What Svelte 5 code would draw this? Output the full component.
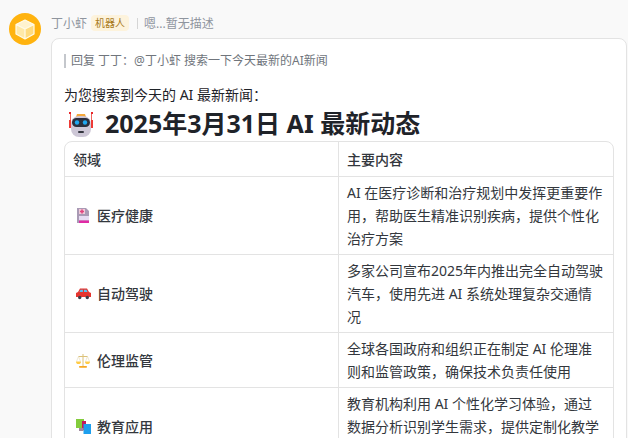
<script>
  const rows = [
    { icon: "med", name: "医疗健康", text: "AI 在医疗诊断和治疗规划中发挥更重要作用，帮助医生精准识别疾病，提供个性化治疗方案" },
    { icon: "car", name: "自动驾驶", text: "多家公司宣布2025年内推出完全自动驾驶汽车，使用先进 AI 系统处理复杂交通情况" },
    { icon: "scale", name: "伦理监管", text: "全球各国政府和组织正在制定 AI 伦理准则和监管政策，确保技术负责任使用" },
    { icon: "books", name: "教育应用", text: "教育机构利用 AI 个性化学习体验，通过数据分析识别学生需求，提供定制化教学内容" }
  ];
</script>

<div class="message">
  <div class="avatar">
    <svg viewBox="0 0 32 32" width="32" height="32">
      <circle cx="16" cy="16" r="16" fill="#ffb30f" />
      <path d="M16 7 25 11.500V21l-9 5-9-5v-9.500z" fill="#ffe9a8" />
      <path d="M16 7 25 11.500 16 16 7 11.500z" fill="#fff3cf" />
      <path d="M16 16v10l9-5v-9.500z" fill="#ffdc80" />
      <path d="M16 7 25 11.500V21l-9 5-9-5v-9.500zM7 11.500 16 16l9-4.500M16 16v10" fill="none" stroke="#fffbe9" stroke-width="1.200" stroke-linejoin="round" />
    </svg>
  </div>
  <div class="body">
    <div class="meta">
      <span class="name">丁小虾</span>
      <span class="tag">机器人</span>
      <span class="desc">嗯...暂无描述</span>
    </div>
    <div class="bubble">
      <div class="reply">回复 丁丁：@丁小虾 搜索一下今天最新的AI新闻</div>
      <p class="intro">为您搜索到今天的 AI 最新新闻：</p>
      <h1>
        <svg class="robot" viewBox="0 0 26 26" width="26" height="26">
          <path d="M9 2h8l1 3H8z" fill="#f6a93b" />
          <path d="M2.500 1v14M23.500 1v14" stroke="#f0645c" stroke-width="1" />
          <rect x="1" y="0" width="2" height="2" fill="#e8262a" />
          <rect x="23" y="0" width="2" height="2" fill="#e8262a" />
          <rect x="1" y="8" width="2" height="8" fill="#ee3b36" />
          <rect x="23" y="8" width="2" height="8" fill="#ee3b36" />
          <rect x="3" y="4" width="20" height="21" rx="8" fill="#cdc7d6" />
          <rect x="4" y="6" width="18" height="9" rx="4.500" fill="#2b2f3d" />
          <circle cx="9" cy="10.500" r="2.200" fill="#1ea7f0" />
          <circle cx="17" cy="10.500" r="2.200" fill="#1ea7f0" />
          <rect x="10" y="19" width="6" height="2" rx="1" fill="#33353f" />
        </svg>
        <span>2025年3月31日 AI 最新动态</span>
      </h1>
      <table>
        <thead>
          <tr><th>领域</th><th>主要内容</th></tr>
        </thead>
        <tbody>
          {#each rows as row}
            <tr>
              <td class="topic">
                <strong>
                  <svg class="emoji" viewBox="0 0 15 15" width="15" height="15">
                    {#if row.icon === "med"}
                      <path d="M1 0h9l3 3v12H1z" fill="#a99ab5" />
                      <rect x="3" y="1" width="6" height="5" fill="#f0c9d8" />
                      <path d="M5.200 1.500h1.600v4H5.200zM4 2.800h4v1.400H4z" fill="#e0457f" />
                      <rect x="3" y="8" width="10" height="4.500" fill="#e6dcf2" />
                      <rect x="3" y="12.500" width="10" height="2.500" fill="#e02aa5" />
                    {:else if row.icon === "car"}
                      <path d="M4 2.500h7l2 3.500 2 1v4H0V7l2-1z" fill="#e5352f" />
                      <path d="M4.600 3.700h2.300V6H3.400zM8 3.700h2.400l1.200 2.300H8z" fill="#59c1f0" />
                      <circle cx="3.700" cy="11.500" r="1.700" fill="#3a3d4a" />
                      <circle cx="11.300" cy="11.500" r="1.700" fill="#3a3d4a" />
                    {:else if row.icon === "scale"}
                      <path d="M7 1v12M2.500 3.500h9" stroke="#dcc27a" stroke-width="1" fill="none" />
                      <path d="M0 8.500h5C5 10.500 4 11 2.500 11S0 10.500 0 8.500zM9 8.500h5c0 2-1 2.500-2.500 2.500S9 10.500 9 8.500z" fill="#ffcb45" />
                      <path d="M2.500 3.500.5 8.500M2.500 3.500l2 5M11.500 3.500l-2 5M11.500 3.500l2 5" stroke="#e0d3a8" stroke-width=".5" />
                      <rect x="3" y="13" width="8" height="1.800" rx=".8" fill="#f7a823" />
                    {:else}
                      <rect x="0" y="0" width="8" height="9" fill="#83cc3c" />
                      <rect x="6" y="2" width="4" height="9" fill="#c2185b" />
                      <rect x="7.500" y="5" width="7.500" height="10" fill="#1e9fee" />
                      <rect x="3" y="9" width="4.500" height="3" fill="#a08aa0" />
                    {/if}
                  </svg>
                  {row.name}
                </strong>
              </td>
              <td>{row.text}</td>
            </tr>
          {/each}
        </tbody>
      </table>
    </div>
  </div>
</div>

<style>
  :global(body) {
    background: #f9f9f9;
    overflow: hidden;
    font-family: "Noto Sans", "Noto Sans CJK SC", sans-serif;
  }

  .message {
    display: flex;
    gap: 10px;
    padding: 13px 1px 0 9px;
    height: 425px;
    overflow: hidden;
  }

  .avatar {
    flex: none;
    width: 32px;
    height: 32px;
  }

  .body {
    flex: 1;
    min-width: 0;
  }

  .meta {
    display: flex;
    align-items: center;
    height: 20px;
    font-size: 12px;
    color: #8f959e;
  }

  .name {
    margin-right: 4px;
  }

  .tag {
    background: #fdf3dc;
    color: #a87a1c;
    border-radius: 4px;
    padding: 0 4px;
    font-size: 10px;
    line-height: 16px;
  }

  .desc {
    margin-left: 8px;
    padding-left: 7px;
    position: relative;
  }

  .desc::before {
    content: "";
    position: absolute;
    left: 0;
    top: 4px;
    bottom: 3px;
    width: 1px;
    background: #d5d5d5;
  }

  .bubble {
    margin-top: 5px;
    background: #fff;
    border: 1px solid #e3e3e3;
    border-radius: 8px 8px 0 0;
    padding: 15px 12px 0 12px;
    color: #1f2329;
  }

  .reply {
    border-left: 2px solid #c4c7cc;
    padding-left: 5px;
    font-size: 12px;
    line-height: 14px;
    color: #70757c;
  }

  .intro {
    margin: 16px 0 0;
    font-size: 14px;
    line-height: 22px;
  }

  h1 {
    margin: 0;
    display: flex;
    align-items: center;
    gap: 11px;
    font-size: 25px;
    line-height: 35px;
    font-weight: 700;
  }

  .robot {
    flex: none;
    margin-left: 4px;
    margin-top: 3px;
  }

  table {
    width: 100%;
    border-collapse: separate;
    border-spacing: 0;
    border: 1px solid #e3e3e3;
    border-radius: 8px;
    table-layout: fixed;
    font-size: 14px;
    color: #33373d;
  }

  th,
  td {
    text-align: left;
    vertical-align: middle;
    padding: 4px 8px;
    line-height: 23px;
    border-bottom: 1px solid #e3e3e3;
  }

  th {
    height: 26px;
    font-weight: 500;
  }

  th:first-child,
  td:first-child {
    border-right: 1px solid #e3e3e3;
  }

  .topic strong {
    display: flex;
    align-items: center;
    gap: 6px;
    font-weight: 500;
    padding-left: 3px;
  }

  .emoji {
    flex: none;
  }
</style>
